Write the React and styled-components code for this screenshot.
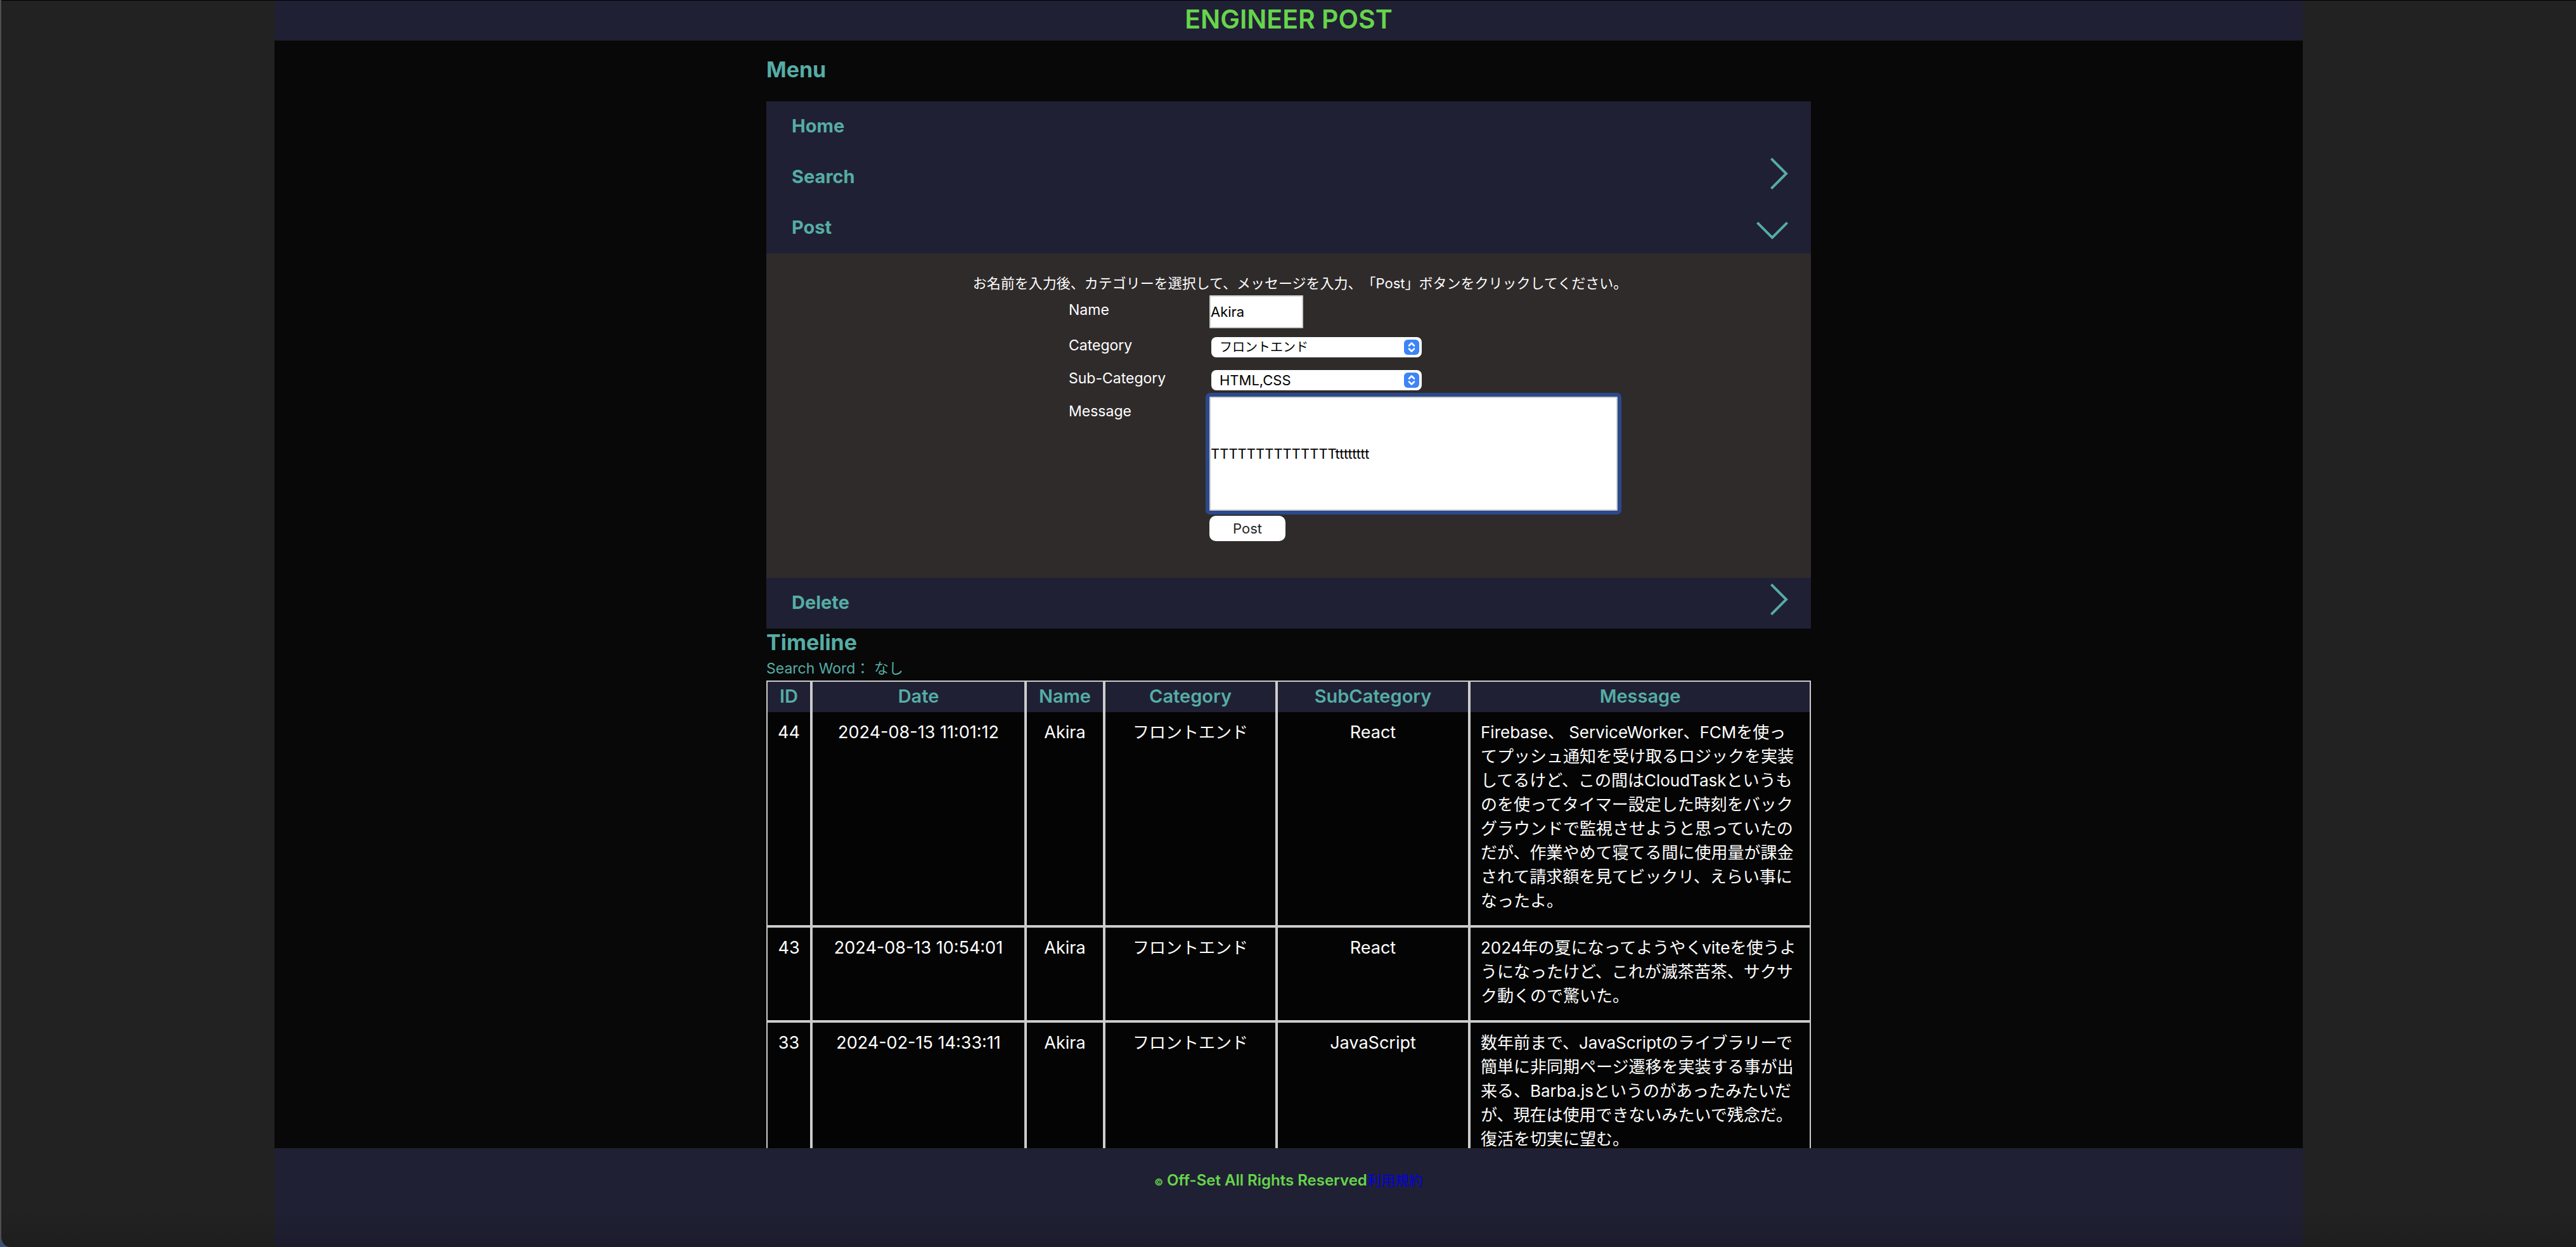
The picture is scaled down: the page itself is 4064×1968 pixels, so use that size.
import React from "react";
import styled, { createGlobalStyle } from "styled-components";

const navy = "#202034";
const teal = "#55ada5";
const green = "#66d54b";
const line = "#cccccc";

const GlobalStyle = createGlobalStyle`
  *, *::before, *::after { box-sizing: border-box; }
  body {
    margin: 0;
    background: #3a4f7c;
    color: #ffffff;
    font-family: Inter, "Noto Sans CJK JP", sans-serif;
    font-size: 26px;
    line-height: 38px;
    text-spacing-trim: space-all;
  }
  h1, h2, p { margin: 0; }
  button, input, select { font-family: inherit; }
`;

const Window = styled.div`
  position: relative;
  display: flex;
  flex-direction: column;
  height: 100vh;
  overflow: hidden;
  background: #222222;
  border-left: 2px solid #505050;
  border-bottom-left-radius: 16px;

  &::after {
    content: "";
    position: absolute;
    inset: 0;
    pointer-events: none;
    border-top: 1px solid #000000;
    background: linear-gradient(to top, rgba(0, 0, 0, 0.12), transparent 60px);
  }
`;

const Page = styled.div`
  display: flex;
  flex-direction: column;
  flex: 1;
  min-height: 0;
  width: 100%;
  max-width: 3200px;
  margin: 0 auto;
  background: #080808;
`;

const Header = styled.header`
  flex: none;
  padding: 6px 0 10px;
  background: ${navy};
  text-align: center;
`;

const Title = styled.h1`
  color: ${green};
  font-size: 41px;
  font-weight: 600;
  line-height: 48px;
`;

const Main = styled.main`
  flex: 1;
  min-height: 0;
  overflow: hidden;
`;

const Content = styled.div`
  width: 100%;
  max-width: 1648px;
  margin: 0 auto;
`;

const Heading = styled.h2`
  padding: ${(p) => p.$pad};
  color: ${teal};
  font-size: 34px;
  font-weight: 700;
  line-height: 44px;
`;

const MenuItem = styled.button`
  display: flex;
  justify-content: space-between;
  align-items: flex-start;
  width: 100%;
  height: 80px;
  padding: 0 36px 0 40px;
  border: 0;
  background: ${navy};
  color: ${teal};
  font-size: 29px;
  font-weight: 700;
  line-height: 78px;
  text-align: left;
`;

const Chevron = styled.svg`
  display: block;
  margin-top: ${(p) => (p.$down ? 30 : 9)}px;
  fill: none;
  stroke: ${teal};
  stroke-width: 4;
`;

const Panel = styled.section`
  padding: 28px 0 58px;
  background: #2f2b2b;
`;

const Guide = styled.p`
  padding-left: 36px;
  font-size: 22px;
  text-align: center;
`;

const Form = styled.form`
  display: grid;
  grid-template-columns: 222px 644px;
  justify-content: center;
  align-items: start;
  padding-left: 172px;
`;

const Label = styled.label`
  padding-top: 4px;
  font-size: 23px;
`;

const Field = styled.div`
  height: ${(p) => p.$height}px;
`;

const TextInput = styled.input`
  display: block;
  width: ${(p) => p.$width}px;
  height: ${(p) => p.$height}px;
  padding: 0;
  border: 2px solid ${line};
  border-radius: 1px;
  background: #ffffff;
  color: #000000;
  font-size: 22px;
  outline: ${(p) => (p.$active ? "6px solid #2b4a8b" : "none")};
`;

const SelectBox = styled.div`
  position: relative;
  width: 332px;
  margin: 10px 0 0 3px;
`;

const Select = styled.select`
  display: block;
  appearance: none;
  width: 100%;
  height: 32px;
  padding: 0 40px 0 13px;
  border: 0;
  border-radius: 8px;
  background: #ffffff;
  color: #000000;
  font-size: ${(p) => (p.$kana ? 20 : 22)}px;
`;

const Stepper = styled.svg`
  position: absolute;
  top: 4px;
  right: 4px;
  pointer-events: none;
`;

const Submit = styled.button`
  grid-column: 2;
  width: 120px;
  height: 40px;
  border: 0;
  border-radius: 10px;
  background: #ffffff;
  color: #262626;
  font-size: 22px;
`;

const SearchWord = styled.p`
  color: ${teal};
  font-size: 23px;
`;

const Table = styled.table`
  width: 100%;
  table-layout: fixed;
  border-collapse: separate;
  border-spacing: 0;
  border-top: 2px solid ${line};
`;

const Col = styled.col`
  width: ${(p) => p.$width};
`;

const Th = styled.th`
  height: 48px;
  padding: 0 0 2px;
  border: solid ${line};
  border-width: 0 2px;
  background: ${navy};
  color: ${teal};
  font-size: 29px;
  font-weight: 600;
  line-height: 46px;
`;

const Td = styled.td`
  padding: 13px 0 19px;
  border: solid ${line};
  border-width: 0 2px 4px;
  background: #040404;
  text-align: center;
  vertical-align: top;
  white-space: nowrap;
`;

const LatinTd = styled(Td)`
  font-size: 27px;
`;

const MessageTd = styled(Td)`
  padding-left: 16px;
  padding-right: 16px;
  text-align: left;
  white-space: normal;
`;

const Footer = styled.footer`
  flex: none;
  height: 156px;
  padding-top: 32px;
  background: ${navy};
  color: ${green};
  font-size: 24px;
  font-weight: 600;
  text-align: center;
`;

const Mark = styled.span`
  font-size: 15px;
`;

const Terms = styled.a`
  color: #0000e0;
  font-size: 22px;
  font-weight: 400;
  text-decoration: none;
`;

const rows = [
  [44, "2024-08-13 11:01:12", "Akira", "フロントエンド", "React", "Firebase、 ServiceWorker、FCMを使ってプッシュ通知を受け取るロジックを実装してるけど、この間はCloudTaskというものを使ってタイマー設定した時刻をバックグラウンドで監視させようと思っていたのだが、作業やめて寝てる間に使用量が課金されて請求額を見てビックリ、えらい事になったよ。"],
  [43, "2024-08-13 10:54:01", "Akira", "フロントエンド", "React", "2024年の夏になってようやくviteを使うようになったけど、これが滅茶苦茶、サクサク動くので驚いた。"],
  [33, "2024-02-15 14:33:11", "Akira", "フロントエンド", "JavaScript", "数年前まで、JavaScriptのライブラリーで簡単に非同期ページ遷移を実装する事が出来る、Barba.jsというのがあったみたいだが、現在は使用できないみたいで残念だ。復活を切実に望む。"],
];

const ChevronRight = () => (
  <Chevron width="28" height="50" viewBox="0 0 28 50" aria-hidden="true">
    <path d="M1.4 1.4 25 25 1.4 48.6" />
  </Chevron>
);

const ChevronDown = () => (
  <Chevron $down width="50" height="28" viewBox="0 0 50 28" aria-hidden="true">
    <path d="M1.4 1.4 25 25 48.6 1.4" />
  </Chevron>
);

const Dropdown = ({ id, kana, options }) => (
  <SelectBox>
    <Select id={id} $kana={kana}>
      {options.map((o) => (
        <option key={o}>{o}</option>
      ))}
    </Select>
    <Stepper width="24" height="24" viewBox="0 0 24 24" aria-hidden="true">
      <rect width="24" height="24" rx="6" fill="#3d84f7" />
      <path d="M8 9.5 12 5.5 16 9.5M8 14.5 12 18.5 16 14.5" fill="none" stroke="#fff" strokeWidth="2.6" strokeLinecap="round" strokeLinejoin="round" />
    </Stepper>
  </SelectBox>
);

export default function App() {
  return (
    <>
      <GlobalStyle />
      <Window>
        <Page>
          <Header>
            <Title>ENGINEER POST</Title>
          </Header>
          <Main>
            <Content>
              <Heading $pad="24px 0 28px">Menu</Heading>
              <nav>
                <MenuItem type="button">Home</MenuItem>
                <MenuItem type="button">Search<ChevronRight /></MenuItem>
                <MenuItem type="button">Post<ChevronDown /></MenuItem>
                <Panel>
                  <Guide>お名前を入力後、カテゴリーを選択して、メッセージを入力、「Post」ボタンをクリックしてください。</Guide>
                  <Form onSubmit={(e) => e.preventDefault()}>
                    <Label htmlFor="name">Name</Label>
                    <Field $height={56}>
                      <TextInput id="name" $width={148} $height={52} defaultValue="Akira" />
                    </Field>
                    <Label htmlFor="category">Category</Label>
                    <Field $height={52}>
                      <Dropdown id="category" kana options={["フロントエンド"]} />
                    </Field>
                    <Label htmlFor="sub">Sub-Category</Label>
                    <Field $height={52}>
                      <Dropdown id="sub" options={["HTML,CSS"]} />
                    </Field>
                    <Label htmlFor="message">Message</Label>
                    <Field $height={188}>
                      <TextInput id="message" $active $width={644} $height={180} defaultValue="TTTTTTTTTTTTTTtttttttt" />
                    </Field>
                    <Submit type="submit">Post</Submit>
                  </Form>
                </Panel>
                <MenuItem type="button">Delete<ChevronRight /></MenuItem>
              </nav>
              <Heading $pad="0">Timeline</Heading>
              <SearchWord>Search Word： なし</SearchWord>
              <Table>
                <colgroup>
                  <Col $width="71px" />
                  <Col $width="338px" />
                  <Col $width="124px" />
                  <Col $width="272px" />
                  <Col $width="304px" />
                  <Col $width="auto" />
                </colgroup>
                <thead>
                  <tr>
                    {["ID", "Date", "Name", "Category", "SubCategory", "Message"].map((h) => (
                      <Th key={h} scope="col">{h}</Th>
                    ))}
                  </tr>
                </thead>
                <tbody>
                  {rows.map(([id, date, name, category, sub, message]) => (
                    <tr key={id}>
                      <LatinTd>{id}</LatinTd>
                      <LatinTd>{date}</LatinTd>
                      <LatinTd>{name}</LatinTd>
                      <Td>{category}</Td>
                      <LatinTd>{sub}</LatinTd>
                      <MessageTd>{message}</MessageTd>
                    </tr>
                  ))}
                </tbody>
              </Table>
            </Content>
          </Main>
          <Footer>
            <Mark>©</Mark> Off-Set All Rights Reserved<Terms href="#terms">利用規約</Terms>
          </Footer>
        </Page>
      </Window>
    </>
  );
}
